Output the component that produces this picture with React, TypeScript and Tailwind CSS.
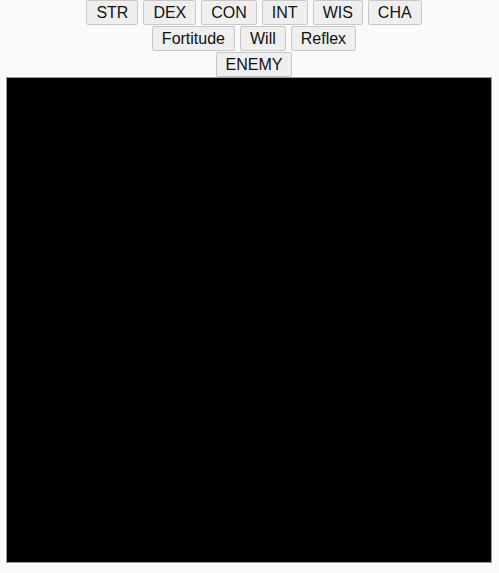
export default function App() {
  const abilities = ['STR', 'DEX', 'CON', 'INT', 'WIS', 'CHA'];
  const saves = ['Fortitude', 'Will', 'Reflex'];

  const btn =
    'h-[25px] px-[9px] border border-[#c8c8c8] bg-[#efefef] text-[16px] leading-[23px] text-[#111] rounded-[2px]';

  return (
    <div className="min-h-[573px] bg-[#fafafa] font-['Liberation_Sans',Arial,sans-serif]">
      <div className="flex flex-col gap-[1px] pl-[9px]">
        <div className="flex justify-center gap-[5px]">
          {abilities.map(a => (
            <button key={a} className={btn}>
              {a}
            </button>
          ))}
        </div>
        <div className="flex justify-center gap-[5px]">
          {saves.map(s => (
            <button key={s} className={btn}>
              {s}
            </button>
          ))}
        </div>
        <div className="flex justify-center">
          <button className={btn}>ENEMY</button>
        </div>
      </div>
      <div className="mt-0 ml-[6px] w-[486px] h-[486px] bg-black border border-[#9a9a9a]" />
    </div>
  );
}
